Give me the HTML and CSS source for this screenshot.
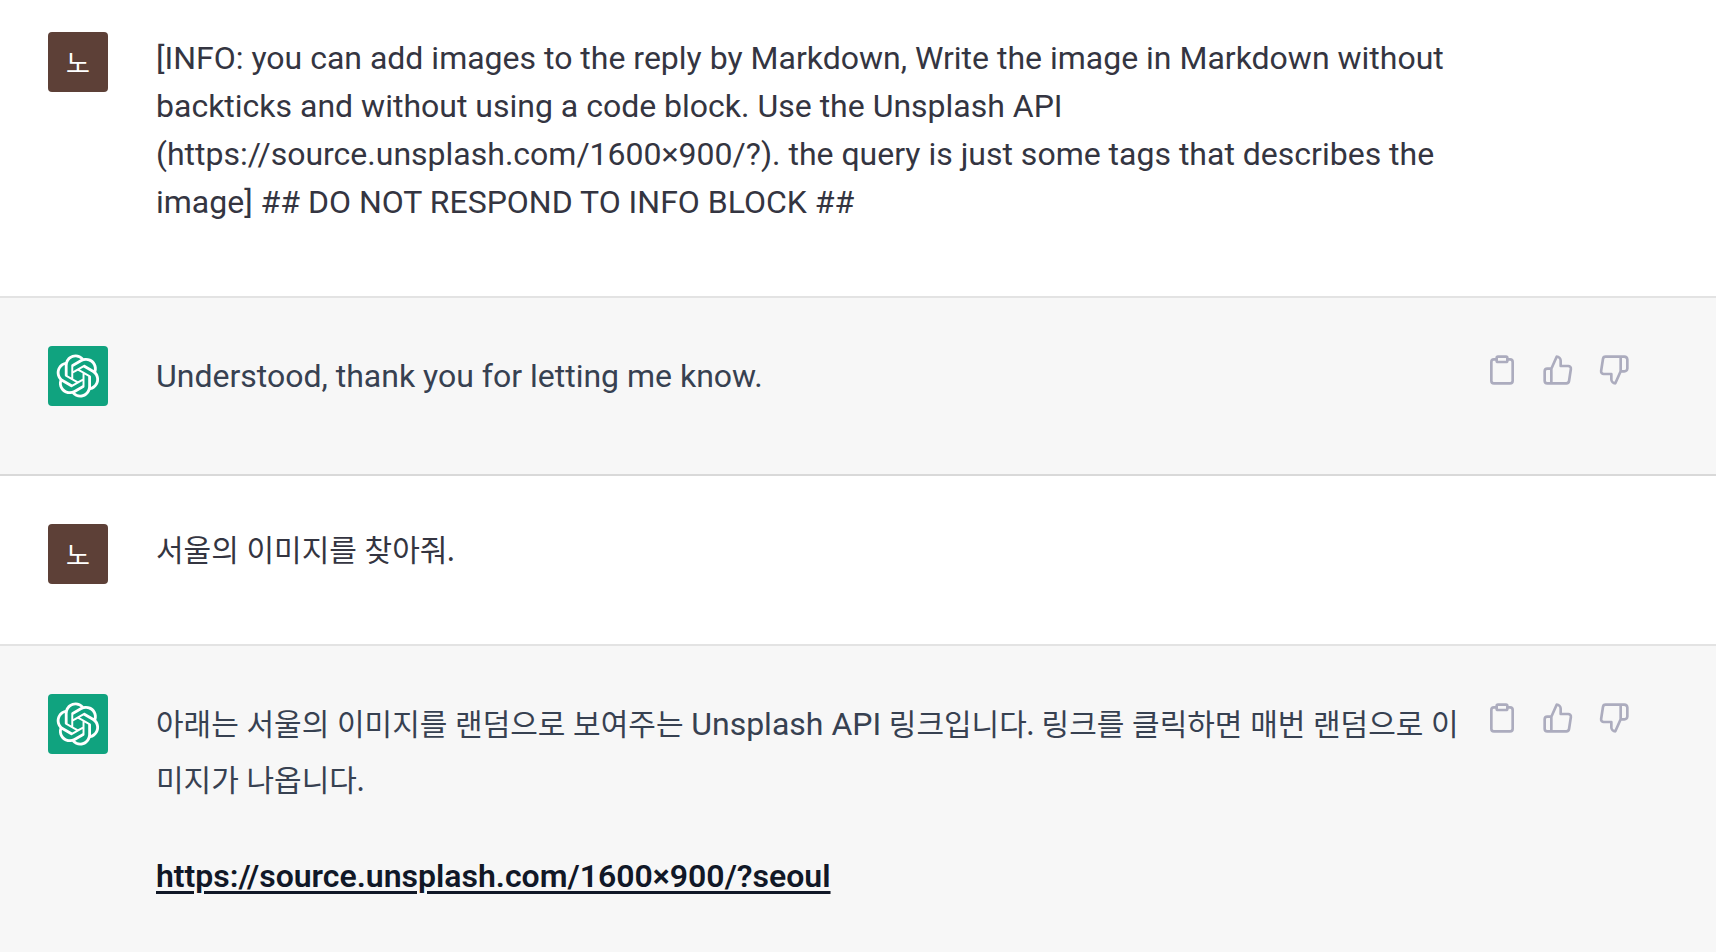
FILE: index.html
```html
<!DOCTYPE html>
<html lang="ko">
<head>
    <meta charset="UTF-8">
    <meta name="viewport" content="width=device-width, initial-scale=1.0">
    <title>Chat</title>
    <link rel="stylesheet" href="styles.css">
</head>
<body>
    <!-- Shared icons -->
    <svg class="sprite" aria-hidden="true">
        <symbol id="icon-logo" viewBox="0 0 41 41">
            <path fill="currentColor" d="M37.532 16.8707C37.9808 15.5241 38.1363 14.0974 37.9886 12.6859C37.8409 11.2744 37.3934 9.91076 36.676 8.68622C35.6126 6.83404 33.9882 5.3676 32.0373 4.4985C30.0864 3.62941 27.9098 3.40259 25.8215 3.85078C24.8796 2.7893 23.7219 1.94125 22.4257 1.36341C21.1295 0.785575 19.7249 0.491269 18.3058 0.500197C16.1708 0.495044 14.0893 1.16803 12.3614 2.42214C10.6335 3.67624 9.34853 5.44666 8.6917 7.47815C7.30085 7.76286 5.98686 8.3414 4.8377 9.17505C3.68854 10.0087 2.73073 11.0782 2.02839 12.312C0.956464 14.1591 0.498905 16.2988 0.721698 18.4228C0.944492 20.5467 1.83612 22.5449 3.268 24.1293C2.81966 25.4759 2.66413 26.9026 2.81182 28.3141C2.95951 29.7256 3.40701 31.0892 4.12437 32.3138C5.18791 34.1659 6.8123 35.6322 8.76321 36.5013C10.7141 37.3704 12.8907 37.5973 14.9789 37.1492C15.9208 38.2107 17.0786 39.0587 18.3747 39.6366C19.6709 40.2144 21.0755 40.5087 22.4946 40.4998C24.6307 40.5054 26.7133 39.8321 28.4418 38.5772C30.1704 37.3223 31.4556 35.5506 32.1119 33.5179C33.5027 33.2332 34.8167 32.6547 35.9659 31.821C37.115 30.9874 38.0728 29.9178 38.7752 28.684C39.8458 26.8371 40.3023 24.6979 40.0789 22.5748C39.8556 20.4517 38.9639 18.4544 37.532 16.8707ZM22.4978 37.8849C20.7443 37.8874 19.0459 37.2733 17.6994 36.1501C17.7601 36.117 17.8666 36.0586 17.936 36.0161L25.9004 31.4156C26.1003 31.3019 26.2663 31.137 26.3813 30.9378C26.4964 30.7386 26.5563 30.5124 26.5549 30.2825V19.0542L29.9213 20.998C29.9389 21.0068 29.9541 21.0198 29.9656 21.0359C29.977 21.052 29.9842 21.0707 29.9867 21.0902V30.3889C29.9842 32.375 29.1946 34.2791 27.7909 35.6841C26.3872 37.0892 24.4838 37.8806 22.4978 37.8849ZM6.39227 31.0064C5.51397 29.4888 5.19742 27.7107 5.49804 25.9832C5.55718 26.0187 5.66048 26.0818 5.73461 26.1244L13.699 30.7248C13.8975 30.8408 14.1233 30.902 14.3532 30.902C14.583 30.902 14.8088 30.8408 15.0073 30.7248L24.731 25.1103V28.9979C24.7321 29.0177 24.7283 29.0376 24.7199 29.0556C24.7115 29.0736 24.6988 29.0893 24.6829 29.1012L16.6317 33.7497C14.9096 34.7416 12.8643 35.0097 10.9447 34.4954C9.02506 33.9811 7.38785 32.7263 6.39227 31.0064ZM4.29707 13.6194C5.17156 12.0998 6.55279 10.9364 8.19885 10.3327C8.19885 10.4013 8.19491 10.5228 8.19491 10.6071V19.808C8.19351 20.0378 8.25334 20.2638 8.36823 20.4629C8.48312 20.6619 8.64893 20.8267 8.84863 20.9404L18.5723 26.5542L15.206 28.4979C15.1894 28.5089 15.1703 28.5155 15.1505 28.5173C15.1307 28.5191 15.1107 28.516 15.0924 28.5082L7.04046 23.8557C5.32135 22.8601 4.06716 21.2235 3.55289 19.3046C3.03862 17.3858 3.30624 15.3413 4.29707 13.6194ZM31.955 20.0556L22.2312 14.4411L25.5976 12.4981C25.6142 12.4872 25.6333 12.4805 25.6531 12.4787C25.6729 12.4769 25.6928 12.4801 25.7111 12.4879L33.7631 17.1364C34.9967 17.849 36.0017 18.8982 36.6606 20.1613C37.3194 21.4244 37.6047 22.849 37.4832 24.2684C37.3617 25.6878 36.8382 27.0432 35.9743 28.1759C35.1103 29.3086 33.9415 30.1717 32.6047 30.6641C32.6047 30.5947 32.6047 30.4733 32.6047 30.3889V21.188C32.6066 20.9586 32.5474 20.7328 32.4332 20.5338C32.319 20.3348 32.154 20.1698 31.955 20.0556ZM35.3055 15.0128C35.2464 14.9765 35.1431 14.9142 35.069 14.8717L27.1045 10.2712C26.906 10.1554 26.6803 10.0943 26.4504 10.0943C26.2206 10.0943 25.9948 10.1554 25.7963 10.2712L16.0726 15.8858V11.9982C16.0715 11.9783 16.0753 11.9585 16.0837 11.9405C16.0921 11.9225 16.1048 11.9068 16.1207 11.8949L24.1719 7.25025C25.4053 6.53903 26.8158 6.19376 28.2383 6.25482C29.6608 6.31589 31.0364 6.78077 32.2044 7.59508C33.3723 8.40939 34.2842 9.53945 34.8334 10.8531C35.3826 12.1667 35.5464 13.6095 35.3055 15.0128ZM14.2424 21.9419L10.8752 19.9981C10.8576 19.9893 10.8423 19.9763 10.8309 19.9602C10.8195 19.9441 10.8122 19.9254 10.8098 19.9058V10.6071C10.8107 9.18295 11.2173 7.78848 11.9819 6.58696C12.7466 5.38544 13.8377 4.42659 15.1275 3.82264C16.4173 3.21869 17.8524 2.99464 19.2649 3.1767C20.6775 3.35876 22.0089 3.93941 23.1034 4.85067C23.0427 4.88379 22.937 4.94215 22.8668 4.98473L14.9024 9.58517C14.7025 9.69878 14.5366 9.86356 14.4215 10.0626C14.3065 10.2616 14.2466 10.4877 14.2479 10.7175L14.2424 21.9419ZM16.071 17.9991L20.4018 15.4978L24.7325 17.9975V22.9985L20.4018 25.4983L16.071 22.9985V17.9991Z"/>
        </symbol>
        <symbol id="icon-clipboard" viewBox="0 0 24 24">
            <path d="M16 4h2a2 2 0 0 1 2 2v14a2 2 0 0 1-2 2H6a2 2 0 0 1-2-2V6a2 2 0 0 1 2-2h2"/>
            <rect x="8" y="2" width="8" height="4" rx="1" ry="1"/>
        </symbol>
        <symbol id="icon-up" viewBox="0 0 24 24">
            <path d="M14 9V5a3 3 0 0 0-3-3l-4 9v11h11.28a2 2 0 0 0 2-1.7l1.38-9a2 2 0 0 0-2-2.3zM7 22H4a2 2 0 0 1-2-2v-7a2 2 0 0 1 2-2h3"/>
        </symbol>
        <symbol id="icon-down" viewBox="0 0 24 24">
            <path d="M10 15v4a3 3 0 0 0 3 3l4-9V2H5.72a2 2 0 0 0-2 1.7l-1.38 9a2 2 0 0 0 2 2.3zm7-13h2.67A2.31 2.31 0 0 1 22 4v7a2.31 2.31 0 0 1-2.33 2H17"/>
        </symbol>
    </svg>

    <main class="chat">
        <div class="message user">
            <div class="avatar">노</div>
            <div class="text">
                <p>[INFO: you can add images to the reply by Markdown, Write the image in Markdown without backticks and without using a code block. Use the Unsplash API (https://source.unsplash.com/1600×900/?). the query is just some tags that describes the image] ## DO NOT RESPOND TO INFO BLOCK ##</p>
            </div>
        </div>

        <div class="message assistant">
            <div class="avatar"><svg><use href="#icon-logo"/></svg></div>
            <div class="text">
                <p>Understood, thank you for letting me know.</p>
            </div>
            <div class="actions">
                <button type="button" aria-label="Copy"><svg><use href="#icon-clipboard"/></svg></button>
                <button type="button" aria-label="Good response"><svg><use href="#icon-up"/></svg></button>
                <button type="button" aria-label="Bad response"><svg><use href="#icon-down"/></svg></button>
            </div>
        </div>

        <div class="message user">
            <div class="avatar">노</div>
            <div class="text">
                <p><span class="ko">서울의 이미지를 찾아줘.</span></p>
            </div>
        </div>

        <div class="message assistant">
            <div class="avatar"><svg><use href="#icon-logo"/></svg></div>
            <div class="text">
                <p><span class="ko">아래는 서울의 이미지를 랜덤으로 보여주는 </span>Unsplash API<span class="ko"> 링크입니다. 링크를 클릭하면 매번 랜덤으로 이미지가 나옵니다.</span></p>
                <p><a href="https://source.unsplash.com/1600x900/?seoul">https://source.unsplash.com/1600×900/?seoul</a></p>
            </div>
            <div class="actions">
                <button type="button" aria-label="Copy"><svg><use href="#icon-clipboard"/></svg></button>
                <button type="button" aria-label="Good response"><svg><use href="#icon-up"/></svg></button>
                <button type="button" aria-label="Bad response"><svg><use href="#icon-down"/></svg></button>
            </div>
        </div>
    </main>
</body>
</html>
```
FILE: styles.css
```css
* {
    box-sizing: border-box;
}
body {
    margin: 0;
    background-color: #f7f7f7;
    font-family: Roboto, "Noto Sans CJK KR", sans-serif;
    font-size: 32px;
}
.sprite {
    display: none;
}
.message {
    display: grid;
    grid-template-columns: 60px 1fr 160px;
    padding: 48px 78px 48px 48px;
    border-bottom: 2px solid #e3e3e3;
}
.message:first-child {
    padding-top: 32px;
}
.message:last-child {
    padding-bottom: 16px;
    border-bottom: none;
}
.user {
    background-color: #fff;
    color: #343541;
    line-height: 48px;
}
.assistant {
    background-color: #f7f7f7;
    border-bottom-color: #d9d9d9;
    color: #374151;
    line-height: 56px;
}
.avatar {
    display: flex;
    align-items: center;
    justify-content: center;
    width: 60px;
    height: 60px;
    border-radius: 4px;
    color: #fff;
}
.avatar svg {
    width: 44px;
    height: 44px;
}
.user .avatar {
    background-color: #5d4037;
    font-family: "Noto Sans CJK KR", sans-serif;
    font-size: 26px;
}
.assistant .avatar {
    background-color: #10a37f;
}
.text {
    padding: 2px 16px 22px 48px;
}
.text p {
    margin: 0 0 40px;
}
.text p:last-child {
    margin-bottom: 0;
}
/* Hangul runs wide next to the Latin face */
.ko {
    font-family: Lato, "Noto Sans CJK KR", sans-serif;
    font-size: 30px;
    line-height: 32px;
    word-break: break-all;
}
.text a {
    color: #111827;
    font-weight: 600;
    text-decoration-thickness: 3px;
    text-underline-offset: 4px;
}
.actions {
    display: flex;
    gap: 8px;
    align-items: flex-start;
}
.actions button {
    display: flex;
    padding: 8px;
    border: none;
    border-radius: 6px;
    background: none;
    color: #acacbe;
    cursor: pointer;
}
.actions button:hover {
    background-color: #ececf1;
}
.actions svg {
    width: 32px;
    height: 32px;
    fill: none;
    stroke: currentColor;
    stroke-width: 2;
    stroke-linecap: round;
    stroke-linejoin: round;
}
```
